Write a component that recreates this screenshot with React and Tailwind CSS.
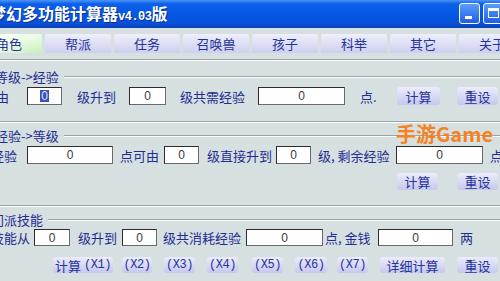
import React from "react";

function Field({ className = "", children = "0" }) {
  return (
    <div
      className={`h-full shrink-0 flex items-center justify-center bg-white border border-[#2c2c2c] border-r-[#6a6a6a] border-b-[#6a6a6a] text-[12px] text-[#3a3a3a] [font-family:'Liberation_Sans',sans-serif] ${className}`}
    >
      {children}
    </div>
  );
}

function Label({ className = "", children }) {
  return (
    <span className={`shrink-0 whitespace-nowrap text-[13px] leading-none text-[#1f2d92] ${className}`}>
      {children}
    </span>
  );
}

function Btn({ className = "", children }) {
  return (
    <div
      className={`shrink-0 h-full flex items-center justify-center rounded-[3px] bg-linear-to-b from-[#ececfb] to-[#c6c8ee] text-[13px] leading-none text-[#26339a] whitespace-nowrap ${className}`}
    >
      {children}
    </div>
  );
}

function Mono({ children }) {
  return <span className="[font-family:'Liberation_Mono',monospace] text-[12px] tracking-[-0.5px]">{children}</span>;
}

function Line({ className = "" }) {
  return <div className={`border-t border-[#9aa4a4] border-b border-b-white ${className}`} />;
}

function GroupHead({ className = "", children }) {
  return (
    <div className={`flex items-center h-[14px] ${className}`}>
      <Label>{children}</Label>
      <Line className="flex-1 ml-[5px] mt-[2px]" />
    </div>
  );
}

const tabs = ["角色", "帮派", "任务", "召唤兽", "孩子", "科举", "其它", "关于"];

export default function App() {
  return (
    <div className="relative w-[500px] h-[281px] overflow-hidden bg-[#d7e0e0] flex flex-col [font-family:'Noto_Sans_CJK_SC',sans-serif]">
      {/* title bar */}
      <div className="h-[28px] shrink-0 flex items-center bg-[linear-gradient(180deg,#4a95f8_0%,#0c5fe9_14%,#0457e2_55%,#0a50d8_85%,#0a40b4_100%)]">
        <span className="ml-[-10px] text-[16px] font-bold leading-none text-white whitespace-nowrap [text-shadow:1px_1px_0_#0a2f8a]">
          梦幻多功能计算器<span className="[font-family:'Liberation_Mono',monospace] text-[12px] tracking-[-0.5px]">v4.03</span>版
        </span>
        <div className="ml-auto mr-[-4px] flex gap-[3px] mb-[2px]">
          <div className="w-[21px] h-[21px] rounded-[3px] border border-white bg-linear-to-b from-[#5a9cfa] to-[#1f5fe6] flex items-end justify-start">
            <div className="ml-[5px] mb-[4px] w-[7px] h-[3px] bg-white" />
          </div>
          <div className="w-[21px] h-[21px] rounded-[3px] border border-white bg-linear-to-b from-[#5a9cfa] to-[#1f5fe6] flex items-center justify-center">
            <div className="w-[11px] h-[10px] border border-white border-t-[3px]" />
          </div>
        </div>
      </div>

      {/* tabs */}
      <div className="mt-[6px] h-[19px] shrink-0 flex gap-[3px] ml-[-24px]">
        {tabs.map((t, i) => (
          <div
            key={t}
            className={`w-[66px] shrink-0 flex items-center justify-center rounded-t-[2px] text-[13px] leading-none text-[#26339a] ${
              i === 0
                ? "bg-linear-to-br from-[#ffffff] via-[#eefbe8] to-[#c6efbb]"
                : "bg-linear-to-b from-[#efeffb] to-[#cdd0ee]"
            }`}
          >
            {t}
          </div>
        ))}
      </div>

      <Line className="mt-[6px]" />

      {/* 等级->经验 */}
      <GroupHead className="mt-[8px] ml-[-5px]">等级-&gt;经验</GroupHead>
      <div className="mt-[4px] h-[18px] flex items-center">
        <Label className="ml-[-4px] w-[13px]">由</Label>
        <Field className="ml-[18px] w-[35px]">
          <span className="bg-[#3a52b8] text-[#d6e2ff] px-[1px] leading-[12px]">0</span>
        </Field>
        <Label className="ml-[15px] w-[39px]">级升到</Label>
        <Field className="ml-[13px] w-[37px]" />
        <Label className="ml-[14px] w-[65px]">级共需经验</Label>
        <Field className="ml-[13px] w-[87px]" />
        <Label className="ml-[15px] w-[20px]">点.</Label>
        <Btn className="ml-[17px] w-[43px]">计算</Btn>
        <Btn className="ml-[17px] w-[41px]">重设</Btn>
      </div>
      <Line className="mt-[16px]" />

      {/* 经验->等级 */}
      <GroupHead className="mt-[5px] ml-[-5px]">经验-&gt;等级</GroupHead>
      <div className="mt-[4px] h-[18px] flex items-center">
        <Label className="ml-[-9px] w-[26px]">经验</Label>
        <Field className="ml-[10px] w-[86px]" />
        <Label className="ml-[7px] w-[39px]">点可由</Label>
        <Field className="ml-[5px] w-[35px]" />
        <Label className="ml-[8px] w-[65px]">级直接升到</Label>
        <Field className="ml-[4px] w-[35px]" />
        <Label className="ml-[7px] w-[71px]">级, 剩余经验</Label>
        <Field className="ml-[7px] w-[87px]" />
        <Label className="ml-[7px]">点</Label>
      </div>
      <div className="mt-[9px] h-[17px] flex justify-end gap-[19px] pr-[2px]">
        <Btn className="w-[41px]">计算</Btn>
        <Btn className="w-[41px]">重设</Btn>
      </div>
      <Line className="mt-[15px]" />

      {/* 门派技能 */}
      <GroupHead className="mt-[5px] ml-[-9px]">门派技能</GroupHead>
      <div className="mt-[3px] h-[17px] flex items-center">
        <Label className="ml-[-9px] w-[39px]">技能从</Label>
        <Field className="ml-[4px] w-[36px]" />
        <Label className="ml-[8px] w-[39px]">级升到</Label>
        <Field className="ml-[5px] w-[35px]" />
        <Label className="ml-[6px] w-[78px]">级共消耗经验</Label>
        <Field className="ml-[5px] w-[77px]" />
        <Label className="ml-[2px] w-[48px]">点, 金钱</Label>
        <Field className="ml-[5px] w-[75px]" />
        <Label className="ml-[7px]">两</Label>
      </div>
      <div className="mt-[11px] h-[16px] flex items-center">
        <Btn className="ml-[53px] w-[60px] gap-[3px]">
          计算<Mono>(X1)</Mono>
        </Btn>
        <Btn className="ml-[9px] w-[30px]"><Mono>(X2)</Mono></Btn>
        <Btn className="ml-[12px] w-[31px]"><Mono>(X3)</Mono></Btn>
        <Btn className="ml-[12px] w-[31px]"><Mono>(X4)</Mono></Btn>
        <Btn className="ml-[14px] w-[31px]"><Mono>(X5)</Mono></Btn>
        <Btn className="ml-[12px] w-[32px]"><Mono>(X6)</Mono></Btn>
        <Btn className="ml-[10px] w-[31px]"><Mono>(X7)</Mono></Btn>
        <Btn className="ml-[12px] w-[65px]">详细计算</Btn>
        <Btn className="ml-[12px] w-[41px]">重设</Btn>
      </div>

      {/* watermark */}
      <div className="absolute left-[396px] top-[124px] text-[20px] font-bold leading-none text-[#f5821f] whitespace-nowrap">
        手游Game
      </div>
    </div>
  );
}
